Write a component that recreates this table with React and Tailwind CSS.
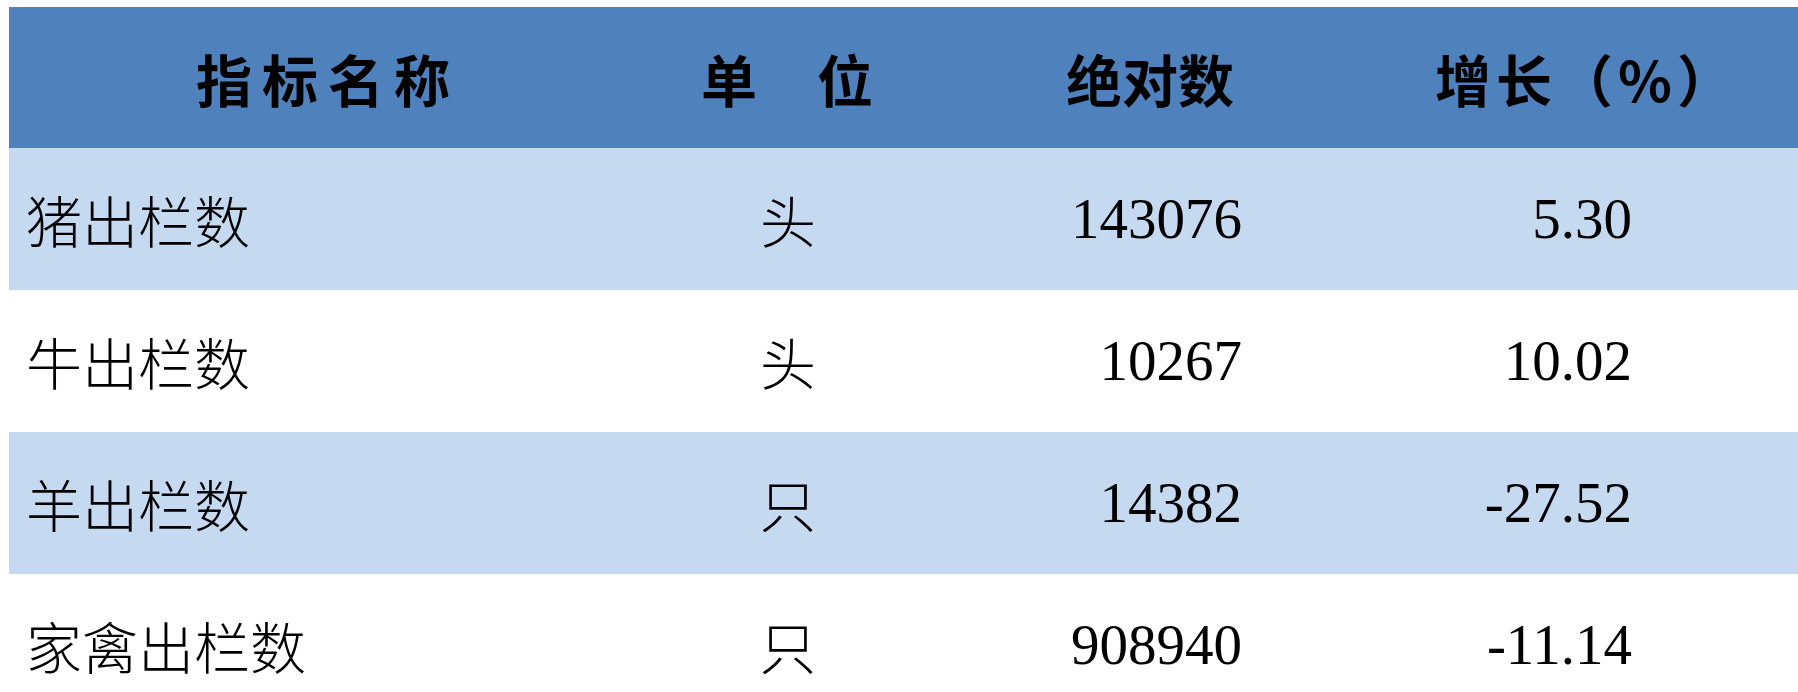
import React from 'react';

const rows = [
  { name: '猪出栏数', unit: '头', value: '143076', growth: '5.30' },
  { name: '牛出栏数', unit: '头', value: '10267', growth: '10.02' },
  { name: '羊出栏数', unit: '只', value: '14382', growth: '-27.52' },
  { name: '家禽出栏数', unit: '只', value: '908940', growth: '-11.14' },
];

const cjk = { fontFamily: '"Noto Sans CJK SC", "Noto Sans", sans-serif' };
const serif = { fontFamily: '"Liberation Serif", "Noto Sans CJK SC", serif' };

const App = () => {
  return (
    <div className="min-h-[692px] w-full overflow-hidden bg-white pt-[7px] pl-[9px]">
      <div className="grid grid-cols-[628px_302px_422px_1fr] text-black">
        {/* header */}
        <div className="contents font-bold text-[56px]" style={cjk}>
          <div className="flex h-[141px] items-center justify-center bg-[#4f81bd] tracking-[10px] pl-[10px]">指标名称</div>
          <div className="flex h-[141px] items-center justify-center bg-[#4f81bd] tracking-[2px]">单　位</div>
          <div className="flex h-[141px] items-center justify-center bg-[#4f81bd]">绝对数</div>
          <div className="flex h-[141px] items-center justify-center bg-[#4f81bd] pl-[14px] tracking-[5px]">增长（%）</div>
        </div>

        {rows.map((r, i) => {
          const bg = i % 2 === 0 ? 'bg-[#c5d9f1]' : 'bg-white';
          return (
            <React.Fragment key={r.name}>
              <div className={`flex h-[142px] items-center pl-[17px] text-[56px] font-light ${bg}`} style={cjk}>
                {r.name}
              </div>
              <div className={`flex h-[142px] items-center justify-center text-[56px] font-light ${bg}`} style={cjk}>
                {r.unit}
              </div>
              <div className={`flex h-[142px] items-center justify-end pr-[119px] text-[57px] ${bg}`} style={serif}>
                {r.value}
              </div>
              <div className={`flex h-[142px] items-center justify-end pr-[166px] text-[57px] ${bg}`} style={serif}>
                {r.growth}
              </div>
            </React.Fragment>
          );
        })}
      </div>
    </div>
  );
};

export default App;
